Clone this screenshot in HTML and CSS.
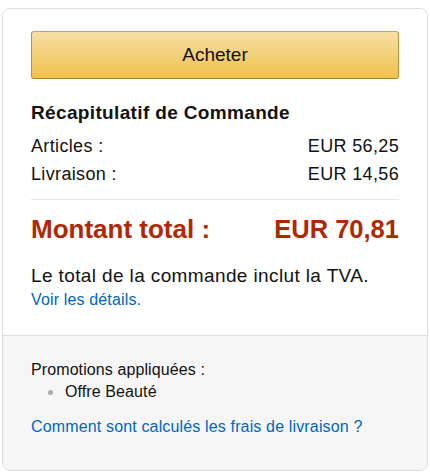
FILE: index.html
```html
<!DOCTYPE html>
<html lang="fr">
<head>
<meta charset="utf-8">
<link rel="stylesheet" href="styles.css">
</head>
<body>
<div class="box">
  <div class="main">
    <button class="buy">Acheter</button>
    <h3 class="title">Récapitulatif de Commande</h3>
    <div class="row first"><span>Articles :</span><span>EUR 56,25</span></div>
    <div class="row"><span>Livraison :</span><span>EUR 14,56</span></div>
    <hr class="sep">
    <div class="total"><span>Montant total :</span><span>EUR 70,81</span></div>
    <p class="vat">Le total de la commande inclut la TVA.</p>
    <a class="link details" href="#">Voir les détails.</a>
  </div>
  <div class="foot">
    <div class="promo">Promotions appliquées :</div>
    <ul class="list"><li>Offre Beauté</li></ul>
    <a class="link shipping" href="#">Comment sont calculés les frais de livraison ?</a>
  </div>
</div>
</body>
</html>
```
FILE: styles.css
```css
html, body { margin: 0; padding: 0; background: #fff; }
body { padding: 8px 2px 0 2px; font-family: "Liberation Sans", Arial, sans-serif; color: #111; }
.box {
  width: 424px;
  height: 461px;
  border: 1px solid #ddd;
  border-radius: 8px;
  overflow: hidden;
  display: flex;
  flex-direction: column;
}
.main { padding: 22px 28px 25px 28px; background: #fff; border-bottom: 1px solid #ddd; }
.buy {
  display: block;
  width: 368px;
  height: 48px;
  margin: 0;
  border: 1px solid;
  border-color: #c9a64a #b89538 #a8842b;
  border-radius: 3px;
  background: linear-gradient(to bottom, #f7dfa5, #f0c14b);
  font-family: "Liberation Sans", Arial, sans-serif;
  font-size: 19px;
  color: #111;
  padding: 0;
}
.title { margin: 22px 0 0 0; font-size: 19px; letter-spacing: 0.35px; font-weight: bold; line-height: 24px; color: #111; }
.row { display: flex; justify-content: space-between; font-size: 18px; letter-spacing: 0.35px; line-height: 28px; color: #111; }
.row.first { margin-top: 7px; }
.sep { margin: 11px 0 0 0; border: 0; border-top: 1px solid #e7e7e7; height: 0; }
.total { display: flex; justify-content: space-between; font-size: 26px; font-weight: bold; color: #b12704; line-height: 32px; margin-top: 13px; }
.total span:last-child { font-size: 25.5px; }
.vat { margin: 19px 0 0 0; font-size: 19px; letter-spacing: 0.38px; line-height: 24px; color: #111; }
.link { color: #0066c0; text-decoration: none; font-size: 16px; line-height: 20px; letter-spacing: 0.15px; }
.details { display: block; margin-top: 2px; }
.foot { flex: 1; background: #f6f6f6; padding: 24px 28px 0 28px; font-size: 16px; letter-spacing: 0.1px; color: #111; }
.promo { line-height: 20px; }
.list { margin: 2px 0 0 0; padding: 0; list-style: none; line-height: 20px; }
.list li { padding-left: 34px; }
.list li::before {
  content: "";
  display: inline-block;
  width: 5px;
  height: 5px;
  border-radius: 50%;
  background: #aaa;
  margin-left: -17px;
  margin-right: 12px;
  vertical-align: middle;
}
.shipping { display: block; margin-top: 15px; }
```
